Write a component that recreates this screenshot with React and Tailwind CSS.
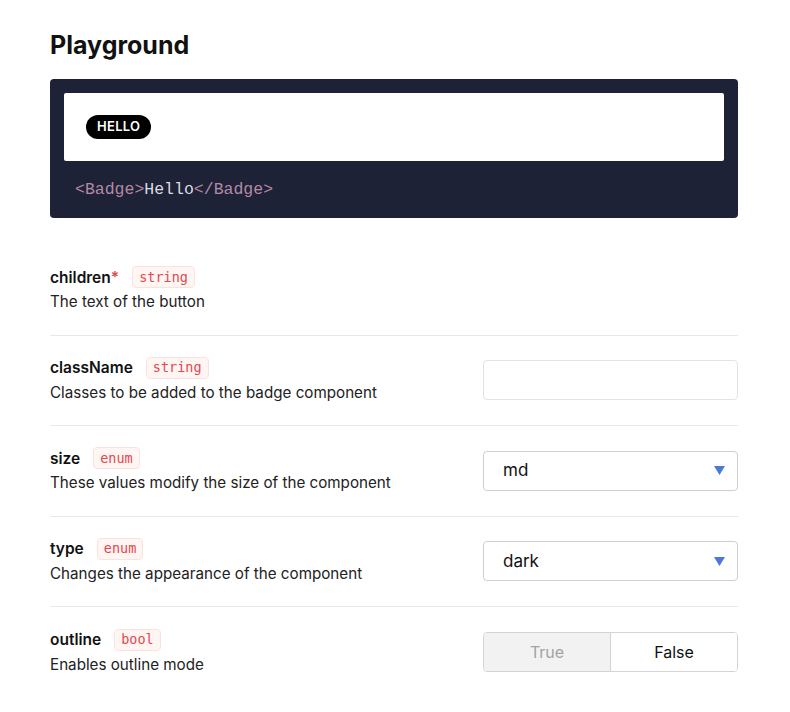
import React from "react";

const sans = { fontFamily: "Inter, 'Noto Sans', 'Liberation Sans', sans-serif" };

function TypeTag({ children }) {
  return (
    <span
      className="inline-flex items-center h-[22px] px-[6px] rounded-[4px] border border-[#fbe3dd] bg-[#fff6f4] text-[#e5484d] text-[13.5px] leading-none"
      style={{ fontFamily: "'DejaVu Sans Mono', 'Liberation Mono', monospace" }}
    >
      {children}
    </span>
  );
}

function Caret() {
  return (
    <svg width="11" height="9" viewBox="0 0 11 9" className="shrink-0">
      <path d="M0 0 H11 L5.5 9 Z" fill="#4a79d6" />
    </svg>
  );
}

function Row({ name, required, type, desc, control, last }) {
  return (
    <div className={`flex items-center justify-between h-[90.5px] ${last ? "" : "border-b border-[#e8e8e8]"}`}>
      <div className="flex flex-col">
        <div className="flex items-center gap-[13px] h-[24px]">
          <span className="text-[15.5px] font-semibold text-[#111]">
            {name}
            {required && <span className="text-[#e5484d]">*</span>}
          </span>
          <TypeTag>{type}</TypeTag>
        </div>
        <div className="text-[15.2px] text-[#222] leading-[24px] mt-[1px]">{desc}</div>
      </div>
      {control}
    </div>
  );
}

function Select({ value }) {
  return (
    <div className="w-[255px] h-[40px] rounded-[4px] border border-[#cfcfcf] bg-white flex items-center justify-between pl-[19px] pr-[12px]">
      <span className="text-[17px] text-[#111]">{value}</span>
      <Caret />
    </div>
  );
}

export default function App() {
  return (
    <div className="min-h-[712px] bg-white" style={sans}>
      <div className="ml-[50px] w-[688px] pt-[29px]">
        <h1 className="text-[25px] font-bold leading-[32px] text-[#111]">Playground</h1>
        <div className="mt-[18px] rounded-[4px] bg-[#1d2236] pt-[14px] px-[14px]">
          <div className="h-[68px] bg-white rounded-[2px] flex items-center pl-[22px]">
            <span className="h-[24px] px-[11px] rounded-full bg-black text-white text-[13px] font-semibold tracking-[0.3px] flex items-center">
              HELLO
            </span>
          </div>
          <div
            className="h-[57px] flex items-center pl-[11px] pt-[1px] text-[16.5px]"
            style={{ fontFamily: "'Liberation Mono', 'Courier New', monospace" }}
          >
            <span className="text-[#b58aa5]">&lt;Badge&gt;</span>
            <span className="text-[#dcdce2]">Hello</span>
            <span className="text-[#b58aa5]">&lt;/Badge&gt;</span>
          </div>
        </div>
        <div className="mt-[27px]">
          <Row name="children" required type="string" desc="The text of the button" control={null} />
          <Row
            name="className"
            type="string"
            desc="Classes to be added to the badge component"
            control={<div className="w-[255px] h-[40px] rounded-[4px] border border-[#e3e3e3] bg-white" />}
          />
          <Row name="size" type="enum" desc="These values modify the size of the component" control={<Select value="md" />} />
          <Row name="type" type="enum" desc="Changes the appearance of the component" control={<Select value="dark" />} />
          <Row
            name="outline"
            type="bool"
            desc="Enables outline mode"
            last
            control={
              <div className="w-[255px] h-[40px] rounded-[4px] border border-[#d4d4d4] flex overflow-hidden">
                <div className="flex-1 bg-[#f2f2f2] border-r border-[#d4d4d4] flex items-center justify-center text-[16px] text-[#a3a3a3]">
                  True
                </div>
                <div className="flex-1 bg-white flex items-center justify-center text-[16px] text-[#111]">False</div>
              </div>
            }
          />
        </div>
      </div>
    </div>
  );
}
